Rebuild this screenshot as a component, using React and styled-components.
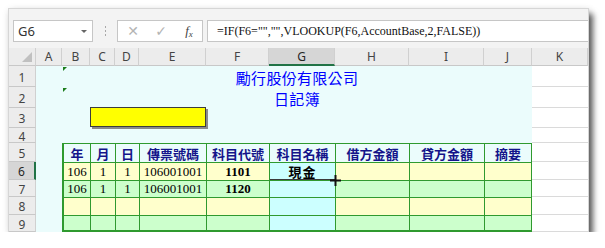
import React from 'react';
import styled, { createGlobalStyle, css } from 'styled-components';

const Global = createGlobalStyle`
  html, body { margin: 0; padding: 0; background: #fff; }
  body { font-family: "Liberation Sans", Arial, sans-serif; }
  * { box-sizing: border-box; }
`;

const GREEN = '#2f9a2f';
const TINT = '#ebfcfc';

const Page = styled.div`
  padding: 9px 0 0 9px;
`;

const Window = styled.div`
  width: 579px;
  height: 223px;
  background: #f3f3f3;
  display: flex;
  flex-direction: column;
  overflow: hidden;
  box-shadow: 0 0 0 1px #d6d6d6, 5px 5px 6px rgba(0, 0, 0, 0.6), 1px 2px 7px rgba(0, 0, 0, 0.25);
`;

const FormulaBar = styled.div`
  display: flex;
  align-items: stretch;
  height: 22px;
  margin: 11px 0 6px 4px;
`;

const NameBox = styled.div`
  width: 80px;
  background: #fff;
  border: 1px solid #c6c6c6;
  display: flex;
  align-items: center;
  padding: 0 5px 0 4px;
  font-size: 13px;
  color: #333;
  font-family: "Noto Sans", "Liberation Sans", sans-serif;
`;

const DropArrow = styled.span`
  margin-left: auto;
  width: 0;
  height: 0;
  border-left: 3px solid transparent;
  border-right: 3px solid transparent;
  border-top: 3px solid #666;
`;

const Grip = styled.div`
  width: 24px;
  display: flex;
  flex-direction: column;
  align-items: center;
  justify-content: center;
  gap: 2px;
  span { width: 1px; height: 2px; background: #a8a8a8; }
`;

const FnBox = styled.div`
  width: 86px;
  background: #fff;
  border: 1px solid #c6c6c6;
  display: grid;
  grid-template-columns: 28px 28px 28px;
  padding-left: 1px;
  align-items: center;
  justify-items: center;
`;

const FnIcon = styled.span`
  font-size: ${(p) => p.$size || 13}px;
  color: ${(p) => (p.$dim ? '#b4b4b4' : '#444')};
  font-family: ${(p) => (p.$serif ? '"Liberation Serif", serif' : '"DejaVu Sans", sans-serif')};
  font-style: ${(p) => (p.$italic ? 'italic' : 'normal')};
  line-height: 1;
`;

const FnSub = styled.span`
  font-size: 9px;
  vertical-align: -2px;
`;

const FormulaInput = styled.div`
  flex: 1;
  margin-left: 4px;
  margin-right: -2px;
  background: #fff;
  border: 1px solid #c6c6c6;
  display: flex;
  align-items: center;
  padding-left: 9px;
  font-family: "Liberation Serif", serif;
  font-size: 12px;
  color: #111;
  white-space: nowrap;
`;

const Sheet = styled.div`
  display: grid;
  grid-template-columns: 27px 26px 28px 25px 24px 67px 63px 66px 74px 75px 48px 56px;
  grid-template-rows: 18px 21px 21px 20px 15px 19px 18px 17px 18px 17px;
  background: #fff;
`;

const headBase = css`
  background: #ececec;
  color: #444;
  font-family: "Noto Sans", "Liberation Sans", sans-serif;
  font-size: 12px;
  display: flex;
  align-items: center;
  justify-content: center;
  border-right: 1px solid #d0d0d0;
  border-bottom: 1px solid #c8c8c8;
`;

const Corner = styled.div`
  ${headBase};
  position: relative;
  &::after {
    content: '';
    position: absolute;
    right: 3px;
    bottom: 3px;
    width: 0;
    height: 0;
    border-left: 10px solid transparent;
    border-bottom: 10px solid #c0c0c0;
  }
`;

const ColHead = styled.div`
  ${headBase};
  ${(p) =>
    p.$active &&
    css`
      background: #d6d6d6;
      color: #262626;
      border-bottom: 2px solid #217346;
    `}
`;

const RowHead = styled.div`
  ${headBase};
  padding-top: 2px;
  ${(p) =>
    p.$active &&
    css`
      background: #d6d6d6;
      color: #262626;
      border-right: 2px solid #217346;
    `}
`;

const Tint = styled.div`
  grid-column: span ${(p) => p.$span || 1};
  position: relative;
  background: ${TINT};
  display: flex;
  align-items: flex-end;
  justify-content: center;
`;

const Blank = styled.div`
  background: #fff;
  border-bottom: 1px solid #dadada;
`;

const Marker = styled.span`
  position: absolute;
  left: 1px;
  top: 1px;
  width: 0;
  height: 0;
  border-top: 4px solid #1b7d1b;
  border-right: 4px solid transparent;
`;

const Title = styled.div`
  font-family: "Noto Sans CJK TC", sans-serif;
  font-size: 15px;
  line-height: 15px;
  color: #0000ff;
  padding-bottom: 2px;
  letter-spacing: 0.3px;
`;

const ShapeSlot = styled.div`
  grid-column: span 3;
  display: flex;
  background: ${TINT};
  padding-bottom: 1px;
`;

const YellowBox = styled.div`
  flex: 1;
  position: relative;
  z-index: 1;
  margin-top: -1px;
  background: #ffff00;
  border: 1px solid #3c3c3c;
  box-shadow: 2px 2px 0 #8a8a8a;
`;

const tones = {
  head: css`background: ${TINT};`,
  yellow: css`background: #ffffcc;`,
  green: css`background: #ccffcc;`,
  aqua: css`background: #ccffff;`,
};

const TCell = styled.div`
  position: relative;
  ${(p) => tones[p.$tone]};
  border-left: ${(p) => (p.$first ? 2 : 1)}px solid ${GREEN};
  border-top: 1px solid ${GREEN};
  border-right: ${(p) => (p.$last ? `1px solid ${GREEN}` : 'none')};
  border-bottom: ${(p) => (p.$bottom ? `2px solid ${GREEN}` : 'none')};
  display: flex;
  align-items: center;
  justify-content: center;
  font-family: "Liberation Serif", serif;
  font-size: 13px;
  color: #000;
  font-weight: ${(p) => (p.$bold ? 700 : 400)};
  white-space: nowrap;
  ${(p) =>
    p.$selected &&
    css`
      box-shadow: inset 0 -1px 0 #3a3a3a;
    `}
`;

const HeadText = styled.span`
  font-family: "Noto Sans CJK TC", sans-serif;
  font-weight: 700;
  font-size: 13px;
  color: #14148a;
  line-height: 1;
`;

const CJKText = styled.span`
  font-family: "Noto Sans CJK TC", sans-serif;
  font-weight: 700;
  font-size: 13px;
  letter-spacing: 1px;
`;

const Cursor = styled.svg`
  position: absolute;
  right: -6px;
  bottom: -6px;
  z-index: 2;
`;

const COLS = ['A', 'B', 'C', 'D', 'E', 'F', 'G', 'H', 'I', 'J', 'K'];
const HEADERS = ['年', '月', '日', '傳票號碼', '科目代號', '科目名稱', '借方金額', '貸方金額', '摘要'];
const ROWS = [
  ['106', '1', '1', '106001001', '1101', '現金', '', '', ''],
  ['106', '1', '1', '106001001', '1120', '', '', '', ''],
  ['', '', '', '', '', '', '', '', ''],
  ['', '', '', '', '', '', '', '', ''],
];

export default function App() {
  return (
    <>
      <Global />
      <Page>
        <Window>
          <FormulaBar>
            <NameBox>
              G6
              <DropArrow />
            </NameBox>
            <Grip>
              <span />
              <span />
              <span />
            </Grip>
            <FnBox>
              <FnIcon $dim $size={14}>✕</FnIcon>
              <FnIcon $dim $size={14}>✓</FnIcon>
              <FnIcon $serif $italic $size={13}>
                f<FnSub>x</FnSub>
              </FnIcon>
            </FnBox>
            <FormulaInput>=IF(F6="","",VLOOKUP(F6,AccountBase,2,FALSE))</FormulaInput>
          </FormulaBar>

          <Sheet>
            <Corner />
            {COLS.map((c) => (
              <ColHead key={c} $active={c === 'G'}>
                {c}
              </ColHead>
            ))}

            <RowHead>1</RowHead>
            <Tint />
            <Tint $span={9}>
              <Marker />
              <Title>勵行股份有限公司</Title>
            </Tint>
            <Blank />

            <RowHead>2</RowHead>
            <Tint />
            <Tint $span={9}>
              <Marker />
              <Title>日記簿</Title>
            </Tint>
            <Blank />

            <RowHead>3</RowHead>
            <Tint $span={2} />
            <ShapeSlot>
              <YellowBox />
            </ShapeSlot>
            <Tint $span={5} />
            <Blank />

            <RowHead>4</RowHead>
            <Tint $span={10} />
            <Blank />

            <RowHead>5</RowHead>
            <Tint />
            {HEADERS.map((h, i) => (
              <TCell key={h} $tone="head" $first={i === 0} $last={i === 8}>
                <HeadText>{h}</HeadText>
              </TCell>
            ))}
            <Blank />

            {ROWS.map((row, r) => (
              <React.Fragment key={r}>
                <RowHead $active={r === 0}>{r + 6}</RowHead>
                <Tint />
                {row.map((v, i) => (
                  <TCell
                    key={i}
                    $tone={i === 5 ? 'aqua' : r % 2 === 0 ? 'yellow' : 'green'}
                    $first={i === 0}
                    $last={i === 8}
                    $bottom={r === 3}
                    $bold={i === 4}
                    $selected={r === 0 && i === 5}
                  >
                    {i === 5 && v ? <CJKText>{v}</CJKText> : v}
                    {r === 0 && i === 5 && (
                      <Cursor width="11" height="11" viewBox="0 0 11 11">
                        <path d="M5.5 0v11M0 5.5h11" stroke="#111" strokeWidth="2" />
                      </Cursor>
                    )}
                  </TCell>
                ))}
                <Blank />
              </React.Fragment>
            ))}
          </Sheet>
        </Window>
      </Page>
    </>
  );
}
